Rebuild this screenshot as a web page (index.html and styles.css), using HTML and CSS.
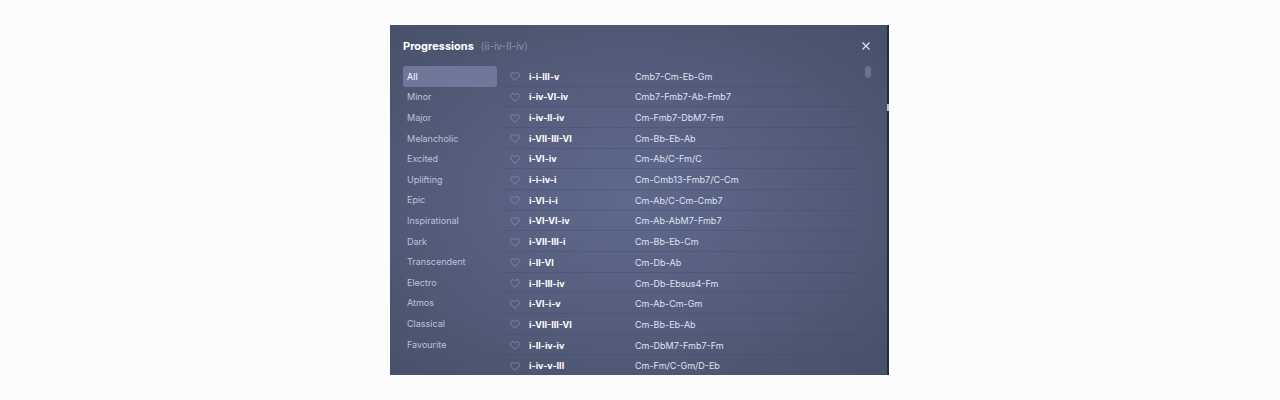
FILE: index.html
```html
<!DOCTYPE html>
<html lang="en">
<head>
  <meta charset="UTF-8">
  <meta name="viewport" content="width=device-width, initial-scale=1.0">
  <title>Progressions</title>
  <link rel="stylesheet" href="styles.css">
</head>
<body>
  <!-- heart shape shared by all rows -->
  <svg class="sprite" aria-hidden="true">
    <symbol id="heart" viewBox="0 0 10 9">
      <path d="M5 8.4 1.3 4.8C.2 3.5.5 1.500 2 .9 3.200.4 4.300.8 5 1.900 5.700.8 6.800.4 8 .9c1.500.6 1.800 2.600.7 3.900Z"/>
    </symbol>
  </svg>

  <main class="panel">
    <header class="panel-header">
      <h1>Progressions</h1>
      <span class="current">(ii-iv-II-iv)</span>
      <button class="close-btn" aria-label="Close">
        <svg viewBox="0 0 8 8"><path d="M.5.5l7 7M7.500.5l-7 7"/></svg>
      </button>
    </header>

    <div class="panel-body">
      <nav class="categories" id="categories" aria-label="Categories"></nav>
      <div class="list">
        <table>
          <tbody id="rows"></tbody>
        </table>
      </div>
      <div class="scrollbar"><div class="thumb"></div></div>
    </div>
    <span class="edge-mark"></span>
  </main>

  <script src="script.js"></script>
</body>
</html>
```

FILE: styles.css
```css
* { box-sizing: border-box; }
body {
  margin: 0;
  min-height: 100vh;
  padding: 25px 1px 25px 0;
  display: flex;
  justify-content: center;
  background: #fdfcfd;
  font-family: Inter, "Liberation Sans", sans-serif;
  font-size: 9px;
  line-height: 12px;
  color: #dfe4f6;
}
button {
  margin: 0;
  padding: 0;
  border: none;
  background: none;
  color: inherit;
  font: inherit;
  cursor: pointer;
}
.sprite { position: absolute; width: 0; height: 0; }

.panel {
  position: relative;
  width: 100%;
  max-width: 499px;
  display: flex;
  flex-direction: column;
  border-right: 2px solid #232a40;
  background: radial-gradient(ellipse at 48% 50%, #5f698c 0%, #576081 38%, #4e5772 72%, #475069 100%);
}
.panel-header {
  display: flex;
  align-items: center;
  height: 41px;
  padding: 0 17px 0 13px;
}
h1 {
  margin: 0;
  font-size: 11px;
  font-weight: 700;
  color: #fff;
}
.current {
  margin-left: 7px;
  font-size: 10px;
  color: #8a92b0;
}
.close-btn {
  display: flex;
  margin-left: auto;
}
.close-btn svg {
  width: 8px;
  height: 8px;
  fill: none;
  stroke: #dfe4f6;
  stroke-width: 1.2;
}

.panel-body {
  flex: 1;
  display: flex;
  padding-left: 13px;
}
.categories {
  width: 94px;
  margin-right: 6px;
  display: grid;
  grid-template-rows: repeat(15, 1fr);
}
.categories button {
  padding: 1px 4px 0;
  border-radius: 3px;
  text-align: left;
  color: #bcc4da;
}
.categories .active {
  background: #70779b;
  color: #fff;
}

.list { flex: 1; }
table {
  width: 100%;
  height: 100%;
  border-collapse: collapse;
  table-layout: fixed;
}
td {
  padding: 2px 0 0;
  border-bottom: 1px solid rgba(60, 68, 98, 0.3);
}
tr:last-child td { border-bottom: none; }
.fav { width: 26px; }
.numerals {
  width: 106px;
  font-weight: 700;
  color: #fff;
}
.fav button {
  display: block;
  margin-left: 7px;
}
.fav svg {
  display: block;
  width: 10px;
  height: 9px;
  fill: none;
  stroke: #7f88a8;
}

.scrollbar {
  width: 31px;
  padding-left: 9px;
}
.thumb {
  width: 6px;
  height: 12px;
  border-radius: 3px;
  background: #6b738c;
}
/* light sliver on the dark right edge */
.edge-mark {
  position: absolute;
  right: -2px;
  top: 79px;
  width: 2px;
  height: 7px;
  background: #bfc2cd;
}
```

FILE: script.js
```js
const categories = [
  "All", "Minor", "Major", "Melancholic", "Excited", "Uplifting", "Epic",
  "Inspirational", "Dark", "Transcendent", "Electro", "Atmos", "Classical", "Favourite"
];

const progressions = [
  ["i-i-III-v", "Cmb7-Cm-Eb-Gm"],
  ["i-iv-VI-iv", "Cmb7-Fmb7-Ab-Fmb7"],
  ["i-iv-II-iv", "Cm-Fmb7-DbM7-Fm"],
  ["i-VII-III-VI", "Cm-Bb-Eb-Ab"],
  ["i-VI-iv", "Cm-Ab/C-Fm/C"],
  ["i-i-iv-i", "Cm-Cmb13-Fmb7/C-Cm"],
  ["i-VI-i-i", "Cm-Ab/C-Cm-Cmb7"],
  ["i-VI-VI-iv", "Cm-Ab-AbM7-Fmb7"],
  ["i-VII-III-i", "Cm-Bb-Eb-Cm"],
  ["i-II-VI", "Cm-Db-Ab"],
  ["i-II-III-iv", "Cm-Db-Ebsus4-Fm"],
  ["i-VI-i-v", "Cm-Ab-Cm-Gm"],
  ["i-VII-III-VI", "Cm-Bb-Eb-Ab"],
  ["i-II-iv-iv", "Cm-DbM7-Fmb7-Fm"],
  ["i-iv-v-III", "Cm-Fm/C-Gm/D-Eb"]
];

document.getElementById("categories").innerHTML = categories
  .map((name, i) => `<button class="${i === 0 ? "active" : ""}">${name}</button>`)
  .join("");

document.getElementById("rows").innerHTML = progressions
  .map(([numerals, chords]) => `
    <tr>
      <td class="fav"><button aria-label="Favourite ${numerals}"><svg><use href="#heart"/></svg></button></td>
      <td class="numerals">${numerals}</td>
      <td>${chords}</td>
    </tr>`)
  .join("");

// switch the highlighted category
document.getElementById("categories").addEventListener("click", e => {
  if (e.target.tagName !== "BUTTON") return;
  document.querySelector(".categories .active").classList.remove("active");
  e.target.classList.add("active");
});
```
